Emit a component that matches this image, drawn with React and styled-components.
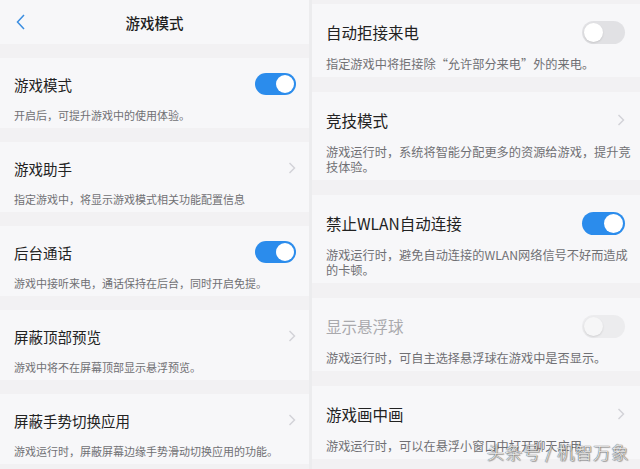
import styled, { createGlobalStyle } from 'styled-components'

const GlobalStyle = createGlobalStyle`
  html, body { margin: 0; padding: 0; }
  body {
    font-family: "Noto Sans CJK SC", "Noto Sans", sans-serif;
    background: #ececee;
  }
`

// Two settings pages side by side
const Screen = styled.div`
  position: relative;
  display: flex;
  gap: 3px;
  width: 640px;
  height: 469px;
  overflow: hidden;
  background: #ececee;
`

const Panel = styled.section`
  flex: ${({ $w }) => ($w ? `0 0 ${$w}px` : '1')};
  display: flex;
  flex-direction: column;
  gap: ${({ $big }) => ($big ? 15 : 14)}px;
  padding-top: ${({ $top }) => $top || 0}px;
  background: #f2f1f3;
`

const Header = styled.header`
  position: relative;
  height: 44px;
  display: flex;
  align-items: center;
  justify-content: center;
  background: #f7f7f9;
  flex-shrink: 0;
`

const Back = styled.svg`
  position: absolute;
  left: 16px;
  top: 14px;
`

const HeaderTitle = styled.h1`
  margin: 0;
  font-size: 14.5px;
  font-weight: 500;
  color: #1f1f1f;
`

const Item = styled.div`
  flex-shrink: 0;
  background: #f7f7f9;
  padding: ${({ $big }) => ($big ? '13px 15px 5px 14px' : '12px 13px 4px 14px')};
`

const Row = styled.div`
  display: flex;
  align-items: center;
  justify-content: space-between;
  height: ${({ $big }) => ($big ? 30 : 28)}px;
`

const Title = styled.span`
  font-size: ${({ $big }) => ($big ? 15.5 : 14.5)}px;
  color: ${({ $disabled }) => ($disabled ? '#a9a9ad' : '#222')};
`

const Desc = styled.p`
  margin: ${({ $big }) => ($big ? 10 : 8)}px ${({ $big }) => ($big ? -8 : 0)}px 0 0;
  font-size: ${({ $big }) => ($big ? 12.2 : 11)}px;
  line-height: ${({ $big }) => ($big ? 15 : 18)}px;
  color: #707074;
`

const Track = styled.span`
  position: relative;
  display: inline-block;
  width: ${({ $big }) => ($big ? 43 : 41)}px;
  height: ${({ $big }) => ($big ? 23 : 22)}px;
  border-radius: 12px;
  background: ${({ $on, $disabled }) => ($on ? '#2b8cec' : $disabled ? '#ececee' : '#e1e1e4')};
`

const Knob = styled.span`
  position: absolute;
  top: 2px;
  ${({ $on }) => ($on ? 'right: 2px;' : 'left: 2px;')}
  width: ${({ $big }) => ($big ? 19 : 18)}px;
  height: ${({ $big }) => ($big ? 19 : 18)}px;
  border-radius: 50%;
  background: ${({ $disabled }) => ($disabled ? '#f6f6f7' : '#fff')};
  box-shadow: ${({ $on }) => ($on ? 'none' : '0 1px 2px rgba(0,0,0,0.12)')};
`

// 水印，压在右下角的最后一行说明上
const Watermark = styled.div`
  position: absolute;
  right: 11px;
  bottom: 5px;
  font-size: 17.5px;
  letter-spacing: 0.5px;
  color: rgba(255, 255, 255, 0.9);
  text-shadow: 0 0 1px #555, 0 0 1px #555, 1px 1px 1px rgba(0,0,0,0.35);
  font-weight: 300;
`

function Toggle({ on, disabled, big }) {
  return (
    <Track $on={on} $disabled={disabled} $big={big}>
      <Knob $on={on} $disabled={disabled} $big={big} />
    </Track>
  )
}

function Chevron() {
  return (
    <svg width="8" height="12" viewBox="0 0 8 12">
      <path d="M1.5 1 L6.5 6 L1.5 11" fill="none" stroke="#d2d2d6" strokeWidth="1.4" />
    </svg>
  )
}

function Setting({ title, desc, control, on, disabled, big }) {
  return (
    <Item $big={big}>
      <Row $big={big}>
        <Title $big={big} $disabled={disabled}>{title}</Title>
        {control === 'toggle' ? <Toggle on={on} disabled={disabled} big={big} /> : <Chevron />}
      </Row>
      <Desc $big={big}>{desc}</Desc>
    </Item>
  )
}

const left = [
  { title: '游戏模式', desc: '开启后，可提升游戏中的使用体验。', control: 'toggle', on: true },
  { title: '游戏助手', desc: '指定游戏中，将显示游戏模式相关功能配置信息' },
  { title: '后台通话', desc: '游戏中接听来电，通话保持在后台，同时开启免提。', control: 'toggle', on: true },
  { title: '屏蔽顶部预览', desc: '游戏中将不在屏幕顶部显示悬浮预览。' },
  { title: '屏蔽手势切换应用', desc: '游戏运行时，屏蔽屏幕边缘手势滑动切换应用的功能。' },
]

const right = [
  { title: '自动拒接来电', desc: '指定游戏中将拒接除“允许部分来电”外的来电。', control: 'toggle' },
  { title: '竞技模式', desc: '游戏运行时，系统将智能分配更多的资源给游戏，提升竞技体验。' },
  { title: '禁止WLAN自动连接', desc: '游戏运行时，避免自动连接的WLAN网络信号不好而造成的卡顿。', control: 'toggle', on: true },
  { title: '显示悬浮球', desc: '游戏运行时，可自主选择悬浮球在游戏中是否显示。', control: 'toggle', disabled: true },
  { title: '游戏画中画', desc: '游戏运行时，可以在悬浮小窗口中打开聊天应用' },
]

export default function App() {
  return (
    <>
      <GlobalStyle />
      <Screen>
        <Panel $w={309}>
          <Header>
            <Back width="10" height="16" viewBox="0 0 10 16">
              <path d="M8 1 L1.5 8 L8 15" fill="none" stroke="#3a8de0" strokeWidth="1.5" />
            </Back>
            <HeaderTitle>游戏模式</HeaderTitle>
          </Header>
          {left.map(s => <Setting key={s.title} {...s} />)}
        </Panel>
        <Panel $big $top={4}>
          {right.map(s => <Setting key={s.title} big {...s} />)}
        </Panel>
        <Watermark>头条号 / 机智万象</Watermark>
      </Screen>
    </>
  )
}
